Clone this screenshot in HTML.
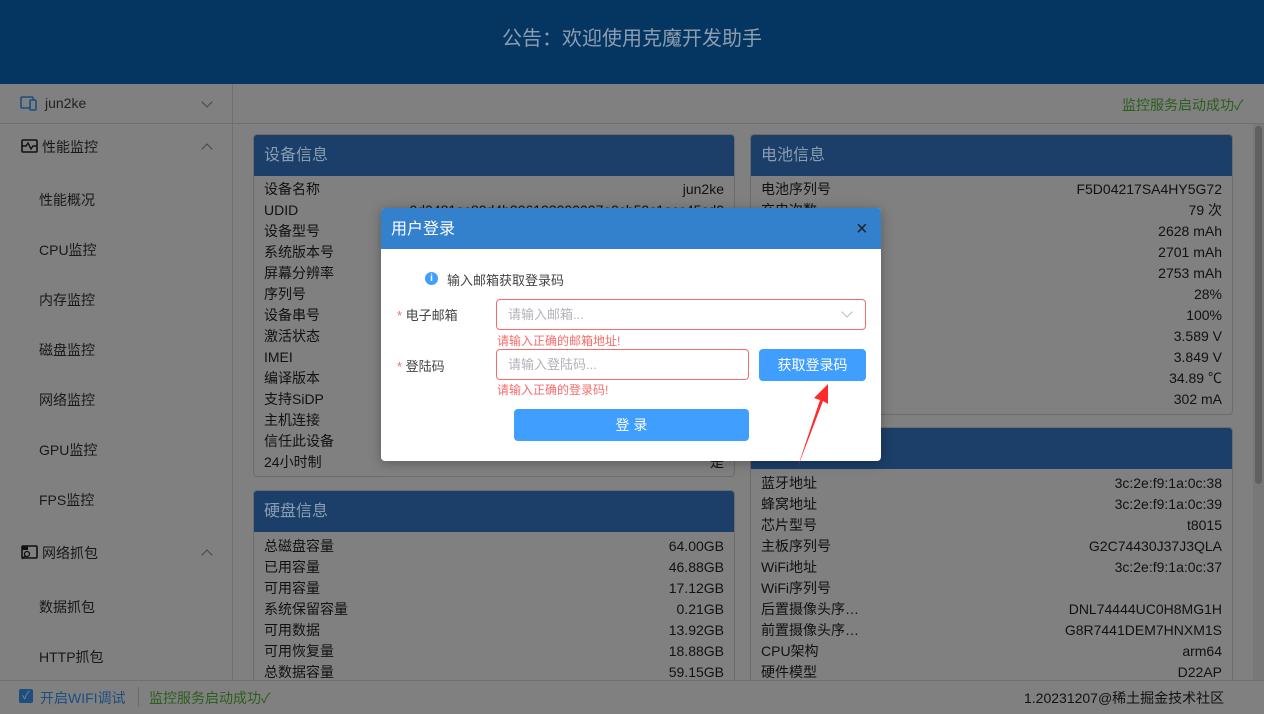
<!DOCTYPE html>
<html><head><meta charset="utf-8"><style>
*{box-sizing:border-box;margin:0;padding:0}
body{width:1264px;height:714px;overflow:hidden;position:relative;background:#808080;font-family:"Liberation Sans","Noto Sans CJK SC",sans-serif;font-size:14px;color:#181818}
.a{position:absolute}
.hdr{left:0;top:0;width:1264px;height:84px;background:#053561;color:#8d9db0;font-size:20px;text-align:center;line-height:78px}
.side{left:0;top:84px;width:233px;height:596px;border-right:1px solid #6f6f6f}
.mi{position:absolute;left:39px;font-size:14px;color:#181818}
.grp{position:absolute;left:20px;font-size:14px;color:#181818}
.card{position:absolute;border:1px solid #6c6c6c;border-radius:4px;overflow:hidden}
.ch{background:#1b3f69;color:#8a9db3;font-size:16px;height:41px;line-height:42px;padding-left:10px}
.row{height:21px;line-height:21px;padding:0 10px;display:flex;justify-content:space-between;font-size:14px;color:#111}
.foot{left:0;top:680px;width:1264px;height:34px;border-top:1px solid #6f6f6f;background:#808080}
.chev{position:absolute;width:8px;height:8px;border-right:1.3px solid #444;border-bottom:1.3px solid #444}
</style></head><body>
<div class="a hdr">公告：欢迎使用克魔开发助手</div>
<div class="a side">
 <div class="a" style="left:0;top:0;width:232px;height:40px;border-bottom:1px solid #6f6f6f"></div>
 <svg class="a" style="left:20px;top:11px" width="18" height="16" viewBox="0 0 18 16"><rect x="1" y="2" width="12" height="11" rx="1" fill="none" stroke="#1c4e80" stroke-width="1.6"/><rect x="10" y="5" width="6" height="10" rx="1" fill="#808080" stroke="#1c4e80" stroke-width="1.6"/></svg>
 <div class="a" style="left:45px;top:11px;color:#222">jun2ke</div>
 <div class="chev" style="left:203px;top:14px;transform:rotate(45deg)"></div>
 <svg class="a" style="left:21px;top:55px" width="17" height="14" viewBox="0 0 17 14"><rect x="1" y="1" width="15" height="12" rx="1" fill="none" stroke="#111" stroke-width="1.6"/><path d="M1 7h4l2-3 3 6 2-3h4" fill="none" stroke="#111" stroke-width="1.4"/></svg>
 <div class="grp" style="left:42px;top:53px">性能监控</div>
 <div class="chev" style="left:203px;top:61px;transform:rotate(225deg)"></div>
 <div class="mi" style="top:106px">性能概况</div>
 <div class="mi" style="top:156px">CPU监控</div>
 <div class="mi" style="top:206px">内存监控</div>
 <div class="mi" style="top:256px">磁盘监控</div>
 <div class="mi" style="top:306px">网络监控</div>
 <div class="mi" style="top:356px">GPU监控</div>
 <div class="mi" style="top:406px">FPS监控</div>
 <svg class="a" style="left:21px;top:461px" width="17" height="15" viewBox="0 0 17 15"><rect x="1" y="1" width="15" height="12" rx="1" fill="none" stroke="#111" stroke-width="1.6"/><rect x="1" y="1" width="6" height="4" fill="#111"/><circle cx="6" cy="9" r="2.5" fill="none" stroke="#111" stroke-width="1.3"/><path d="M4 11l-3 3" stroke="#111" stroke-width="1.4"/></svg>
 <div class="grp" style="left:42px;top:459px">网络抓包</div>
 <div class="chev" style="left:203px;top:467px;transform:rotate(225deg)"></div>
 <div class="mi" style="top:513px">数据抓包</div>
 <div class="mi" style="top:563px">HTTP抓包</div>
</div>
<div class="a" style="left:233px;top:123px;width:1031px;border-top:1px solid #6f6f6f"></div>
<div class="a" style="left:1122px;top:95px;color:#2b5e1c">监控服务启动成功✓</div>
<div class="a" style="left:1253px;top:124px;width:11px;height:556px;background:#787878"></div>
<div class="a" style="left:1255px;top:126px;width:7px;height:358px;background:#606060;border-radius:4px"></div>

<div class="card" style="left:253px;top:134px;width:482px;height:343px">
 <div class="ch">设备信息</div>
 <div style="padding-top:3px">
 <div class="row"><span>设备名称</span><span>jun2ke</span></div>
 <div class="row"><span>UDID</span><span>0d0481ac80d4b206193000007e0cb59c1acc45cd0</span></div>
 <div class="row"><span>设备型号</span><span></span></div>
 <div class="row"><span>系统版本号</span><span></span></div>
 <div class="row"><span>屏幕分辨率</span><span></span></div>
 <div class="row"><span>序列号</span><span></span></div>
 <div class="row"><span>设备串号</span><span></span></div>
 <div class="row"><span>激活状态</span><span></span></div>
 <div class="row"><span>IMEI</span><span></span></div>
 <div class="row"><span>编译版本</span><span></span></div>
 <div class="row"><span>支持SiDP</span><span></span></div>
 <div class="row"><span>主机连接</span><span></span></div>
 <div class="row"><span>信任此设备</span><span></span></div>
 <div class="row"><span>24小时制</span><span>是</span></div>
 </div>
</div>
<div class="card" style="left:253px;top:490px;width:482px;height:200px">
 <div class="ch">硬盘信息</div>
 <div style="padding-top:4px">
 <div class="row"><span>总磁盘容量</span><span>64.00GB</span></div>
 <div class="row"><span>已用容量</span><span>46.88GB</span></div>
 <div class="row"><span>可用容量</span><span>17.12GB</span></div>
 <div class="row"><span>系统保留容量</span><span>0.21GB</span></div>
 <div class="row"><span>可用数据</span><span>13.92GB</span></div>
 <div class="row"><span>可用恢复量</span><span>18.88GB</span></div>
 <div class="row"><span>总数据容量</span><span>59.15GB</span></div>
 </div>
</div>
<div class="card" style="left:750px;top:134px;width:483px;height:281px">
 <div class="ch">电池信息</div>
 <div style="padding-top:3px">
 <div class="row"><span>电池序列号</span><span>F5D04217SA4HY5G72</span></div>
 <div class="row"><span>充电次数</span><span>79 次</span></div>
 <div class="row"><span></span><span>2628 mAh</span></div>
 <div class="row"><span></span><span>2701 mAh</span></div>
 <div class="row"><span></span><span>2753 mAh</span></div>
 <div class="row"><span></span><span>28%</span></div>
 <div class="row"><span></span><span>100%</span></div>
 <div class="row"><span></span><span>3.589 V</span></div>
 <div class="row"><span></span><span>3.849 V</span></div>
 <div class="row"><span></span><span>34.89 ℃</span></div>
 <div class="row"><span></span><span>302 mA</span></div>
 </div>
</div>
<div class="card" style="left:750px;top:427px;width:483px;height:270px">
 <div class="ch">硬件信息</div>
 <div style="padding-top:4px">
 <div class="row"><span>蓝牙地址</span><span>3c:2e:f9:1a:0c:38</span></div>
 <div class="row"><span>蜂窝地址</span><span>3c:2e:f9:1a:0c:39</span></div>
 <div class="row"><span>芯片型号</span><span>t8015</span></div>
 <div class="row"><span>主板序列号</span><span>G2C74430J37J3QLA</span></div>
 <div class="row"><span>WiFi地址</span><span>3c:2e:f9:1a:0c:37</span></div>
 <div class="row"><span>WiFi序列号</span><span></span></div>
 <div class="row"><span>后置摄像头序…</span><span>DNL74444UC0H8MG1H</span></div>
 <div class="row"><span>前置摄像头序…</span><span>G8R7441DEM7HNXM1S</span></div>
 <div class="row"><span>CPU架构</span><span>arm64</span></div>
 <div class="row"><span>硬件模型</span><span>D22AP</span></div>
 </div>
</div>
<div class="a foot">
 <div class="a" style="left:19px;top:8px;width:14px;height:14px;background:#1c4e80;border-radius:2px;color:#888;font-size:11px;text-align:center;line-height:14px">✓</div>
 <div class="a" style="left:40px;top:7px;color:#1c4e80">开启WIFI调试</div>
 <div class="a" style="left:138px;top:6px;height:20px;border-left:1px solid #6a6a6a"></div>
 <div class="a" style="left:149px;top:7px;color:#2b5e1c">监控服务启动成功✓</div>
 <div class="a" style="left:1024px;top:7px;color:#111">1.20231207@稀土掘金技术社区</div>
</div>

<div class="a" style="left:381px;top:208px;width:500px;height:253px;background:#fff;border-radius:4px;overflow:hidden;box-shadow:0 2px 12px rgba(0,0,0,.3)">
 <div style="height:41px;background:#3380cc;color:#fff;font-size:16px;line-height:43px;padding-left:10px">用户登录</div>
 <div class="a" style="left:475px;top:10px;color:#222;font-size:20px">×</div>
 <div class="a" style="left:44px;top:64px;width:13px;height:13px;border-radius:50%;background:#409eff;color:#fff;font-size:10px;text-align:center;line-height:13px;font-weight:bold">i</div>
 <div class="a" style="left:66px;top:62px;font-size:13px;color:#444">输入邮箱获取登录码</div>
 <div class="a" style="left:16px;top:97px;font-size:13px;color:#444"><span style="color:#f56c6c">*</span> 电子邮箱</div>
 <div class="a" style="left:115px;top:91px;width:370px;height:31px;border:1px solid #f56c6c;border-radius:4px;color:#b0b3b8;font-size:13px;line-height:29px;padding-left:11px">请输入邮箱...<span class="chev" style="right:14px;top:8px;border-color:#bbb;transform:rotate(45deg)"></span></div>
 <div class="a" style="left:116px;top:124px;font-size:12px;color:#f56c6c">请输入正确的邮箱地址!</div>
 <div class="a" style="left:16px;top:148px;font-size:13px;color:#444"><span style="color:#f56c6c">*</span> 登陆码</div>
 <div class="a" style="left:115px;top:141px;width:253px;height:31px;border:1px solid #f56c6c;border-radius:4px;color:#b0b3b8;font-size:13px;line-height:29px;padding-left:11px">请输入登陆码...</div>
 <div class="a" style="left:378px;top:141px;width:107px;height:32px;background:#409eff;border-radius:4px;color:#fff;font-size:14px;text-align:center;line-height:32px">获取登录码</div>
 <div class="a" style="left:116px;top:173px;font-size:12px;color:#f56c6c">请输入正确的登录码!</div>
 <div class="a" style="left:133px;top:201px;width:235px;height:32px;background:#409eff;border-radius:4px;color:#fff;font-size:14px;text-align:center;line-height:32px">登 录</div>
</div>
<svg class="a" style="left:790px;top:380px" width="50" height="90" viewBox="0 0 50 90"><path d="M7 89 L30 20 L24 18 L38 4 L38 24 L33 21 Z" fill="#ff2a2a"/></svg>
</body></html>
